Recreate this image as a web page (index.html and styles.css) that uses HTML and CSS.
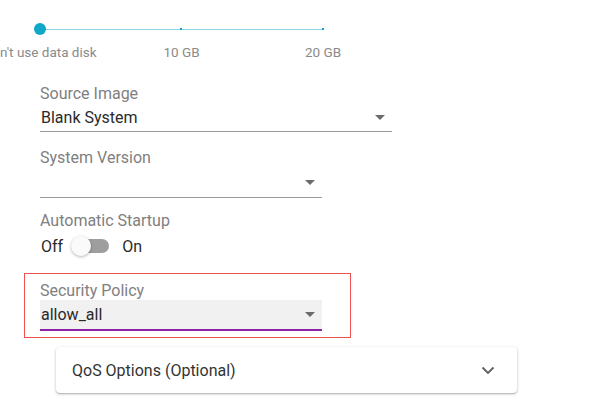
FILE: index.html
```html
<!DOCTYPE html>
<html>
<head>
<meta charset="utf-8">
<link rel="stylesheet" href="styles.css">
</head>
<body>
<div class="page">
  <div class="slider">
    <div class="track">
      <span class="thumb"></span>
      <span class="tick"></span>
      <span class="tick"></span>
    </div>
    <div class="marks">
      <span class="mark"><span>Don't use data disk</span></span>
      <span class="mark"><span>10 GB</span></span>
      <span class="mark"><span>20 GB</span></span>
    </div>
  </div>

  <div class="field wide">
    <div class="label">Source Image</div>
    <div class="select">
      <span class="value">Blank System</span>
      <span class="arrow"></span>
    </div>
  </div>

  <div class="field narrow">
    <div class="label">System Version</div>
    <div class="select tall">
      <span class="value"></span>
      <span class="arrow"></span>
    </div>
  </div>

  <div class="switch-field">
    <div class="label">Automatic Startup</div>
    <div class="switch-row">
      <span class="opt">Off</span>
      <span class="switch"><span class="switch-track"></span><span class="switch-thumb"></span></span>
      <span class="opt">On</span>
    </div>
  </div>

  <div class="highlight">
    <div class="label">Security Policy</div>
    <div class="select filled">
      <span class="value">allow_all</span>
      <span class="arrow"></span>
    </div>
  </div>

  <div class="card">
    <span class="card-title">QoS Options (Optional)</span>
    <svg class="chevron" width="14" height="9" viewBox="0 0 14 9"><path d="M1.5 1.5 L7 7 L12.5 1.5" fill="none" stroke="#5f5f5f" stroke-width="1.8"/></svg>
  </div>
</div>
</body>
</html>
```

FILE: styles.css
```css
html, body {
  margin: 0;
  padding: 0;
  background: #ffffff;
}
body {
  font-family: Roboto, "Noto Sans", Arial, sans-serif;
  color: #212121;
  width: 590px;
  height: 416px;
  overflow: hidden;
}
.page {
  padding: 23px 0 0 40px;
}
.slider {
  width: 283px;
}
.track {
  position: relative;
  height: 12px;
}
.track::before {
  content: "";
  position: absolute;
  left: 0;
  right: 0;
  top: 5.5px;
  height: 1px;
  background: #8ad6e5;
}
.thumb {
  position: absolute;
  left: -6px;
  top: 0;
  width: 12px;
  height: 12px;
  border-radius: 50%;
  background: #10a8c6;
}
.tick {
  position: absolute;
  top: 5px;
  width: 2px;
  height: 2px;
  background: #10a8c6;
}
.tick:nth-child(2) { left: 140px; }
.tick:nth-child(3) { left: 282px; }
.marks {
  display: flex;
  justify-content: space-between;
  margin-top: 9px;
  height: 17px;
}
.mark {
  width: 0;
  display: flex;
  justify-content: center;
  white-space: nowrap;
  font-size: 13.5px;
  line-height: 17px;
  color: #8a8a8a;
}
.label {
  font-size: 16px;
  line-height: 18px;
  color: #808080;
}
.field {
  margin-top: 24px;
}
.field.narrow { margin-top: 17px; width: 282px; }
.field.wide { width: 352px; }
.select {
  height: 27px;
  display: flex;
  align-items: center;
  justify-content: space-between;
  border-bottom: 1px solid #9a9a9a;
  margin-top: 1px;
}
.select.tall { height: 29px; }
.value {
  font-size: 16px;
  color: #2a2a2a;
  padding-left: 1px;
}
.arrow {
  width: 0;
  height: 0;
  border-left: 5px solid transparent;
  border-right: 5px solid transparent;
  border-top: 5px solid #6b6b6b;
  margin-right: 7px;
}
.switch-field {
  margin-top: 14px;
}
.switch-row {
  display: flex;
  align-items: center;
  height: 26px;
  margin-top: 3px;
}
.opt {
  font-size: 16px;
  color: #2a2a2a;
  padding-left: 1px;
}
.switch {
  position: relative;
  width: 38px;
  height: 20px;
  margin: 0 12px 0 8px;
  display: flex;
  align-items: center;
}
.switch-track {
  margin-left: 8px;
  width: 30px;
  height: 14px;
  border-radius: 7px;
  background: #9e9e9e;
}
.switch-thumb {
  position: absolute;
  left: 0;
  top: 0;
  width: 20px;
  height: 20px;
  border-radius: 50%;
  background: #fafafa;
  box-shadow: 0 1px 3px rgba(0,0,0,0.3);
}
.highlight {
  margin: 14px 0 0 -16px;
  width: 282px;
  padding: 8px 28px 6px 15px;
  border: 1px solid #ef5350;
}
.select.filled {
  width: 282px;
  height: 29px;
  background: #f1f1f1;
  border-bottom: 2px solid #8e24aa;
  margin-top: 0;
}
.card {
  margin: 9px 0 0 16px;
  width: 429px;
  height: 46px;
  padding: 0 16px;
  display: flex;
  align-items: center;
  justify-content: space-between;
  border-radius: 4px;
  box-shadow: 0 1px 3px rgba(0,0,0,0.25), 0 1px 1px rgba(0,0,0,0.12);
  background: #fff;
}
.card-title {
  font-size: 16px;
  color: #333333;
}
.chevron {
  margin-right: 6px;
}
```
